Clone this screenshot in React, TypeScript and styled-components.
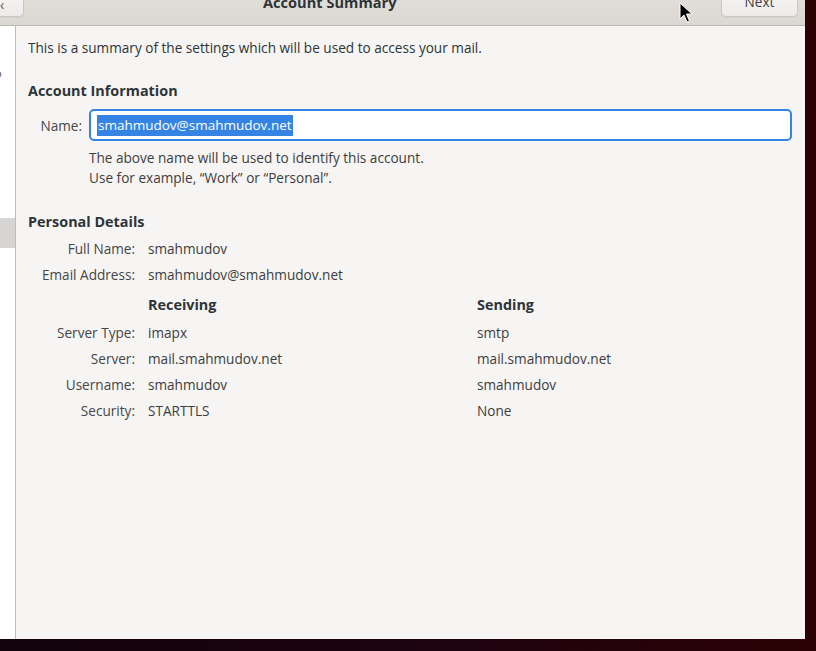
import React from "react";
import styled, { createGlobalStyle } from "styled-components";

const Global = createGlobalStyle`
  html, body { margin: 0; padding: 0; }
  body {
    width: 816px;
    height: 651px;
    overflow: hidden;
    background: linear-gradient(90deg, #12030d 0%, #1c0310 50%, #2c0205 100%);
    font-family: "Open Sans", "Noto Sans", sans-serif;
    font-size: 13.6px;
    color: #2e3436;
  }
`;

const Screen = styled.div`
  position: relative;
  width: 816px;
  height: 651px;
  overflow: hidden;
`;

const Window = styled.div`
  width: 805px;
  height: 639px;
  background: #f6f5f4;
  display: flex;
  flex-direction: column;
  overflow: hidden;
`;

const HeaderBar = styled.div`
  height: 25px;
  flex: none;
  display: flex;
  align-items: flex-start;
  background: linear-gradient(#e1deda, #dbd8d4);
  border-bottom: 1px solid #bdb8b2;
`;

const HeaderButton = styled.div<{ $width: number }>`
  width: ${(p) => p.$width}px;
  height: 27px;
  margin-top: -10px;
  box-sizing: border-box;
  background: linear-gradient(#f6f5f4, #edebe9);
  border: 1px solid #cdc7c2;
  border-radius: 5px;
  box-shadow: 0 1px 0 rgba(0, 0, 0, 0.05);
  display: flex;
  align-items: center;
  justify-content: center;
  font-size: 13.6px;
  color: #2e3436;
  padding-top: 2px;
`;

const BackButton = styled(HeaderButton)`
  border-top-left-radius: 0;
  border-bottom-left-radius: 0;
  border-left: none;
  justify-content: flex-start;
  font-size: 14px;
  color: #555;
`;

const Title = styled.div`
  margin-left: 239px;
  margin-top: -6px;
  font-weight: 700;
  font-size: 14.6px;
  line-height: 17px;
  color: #2e3436;
`;

const Spacer = styled.div`
  flex: 1;
`;

const NextButton = styled(HeaderButton)`
  margin-right: 7px;
  align-items: flex-start;
  padding-top: 3px;
  line-height: 16px;
  color: #3d3d3d;
`;

const Body = styled.div`
  flex: 1;
  display: flex;
  min-height: 0;
`;

const Sidebar = styled.div`
  width: 15px;
  flex: none;
  background: #ffffff;
  border-right: 1px solid #c0bdb9;
  display: flex;
  flex-direction: column;
  overflow: hidden;
`;

const SideItem = styled.div<{ $selected?: boolean; $height: number }>`
  height: ${(p) => p.$height}px;
  background: ${(p) => (p.$selected ? "#d6d5d3" : "transparent")};
  font-size: 13px;
  line-height: ${(p) => p.$height}px;
  color: #666;
  white-space: nowrap;
  text-indent: -6px;
`;

const Content = styled.div`
  flex: 1;
  padding: 13px 13px 0 12px;
  display: flex;
  flex-direction: column;
`;

const Intro = styled.div`
  line-height: 18px;
  color: #2e3436;
`;

const SectionTitle = styled.div<{ $top: number }>`
  margin-top: ${(p) => p.$top}px;
  font-weight: 700;
  font-size: 14.4px;
  line-height: 18px;
  color: #2e3436;
`;

const NameGrid = styled.div`
  margin-top: 9px;
  display: grid;
  grid-template-columns: 54px 1fr;
  column-gap: 7px;
  align-items: center;
`;

const Label = styled.div`
  text-align: right;
  color: #464646;
  white-space: nowrap;
`;

const NameInput = styled.div`
  height: 32px;
  box-sizing: border-box;
  border: 2px solid #3584e4;
  border-radius: 5px;
  background: #ffffff;
  display: flex;
  align-items: center;
  padding-left: 6px;
`;

const Selected = styled.span`
  background: #3584e4;
  color: #ffffff;
  font-size: 13.5px;
  line-height: 21px;
  padding: 0 1px;
`;

const Help = styled.div`
  margin-top: 7px;
  margin-left: 61px;
  line-height: 20px;
  color: #3d3d3d;
`;

const DetailGrid = styled.div`
  margin-top: 4px;
  display: grid;
  grid-template-columns: 107px 316px 1fr;
  grid-template-rows: 26px 26px 32px repeat(4, 26px);
  column-gap: 13px;
  align-items: center;
`;

const Value = styled.div`
  color: #3d3d3d;
  white-space: nowrap;
`;

const ColumnHead = styled.div`
  font-weight: 700;
  font-size: 14.4px;
  color: #2e3436;
  padding-top: 3px;
`;

const Cursor = styled.svg`
  position: absolute;
  left: 679px;
  top: 2px;
`;

const personal: [string, string][] = [
  ["Full Name:", "smahmudov"],
  ["Email Address:", "smahmudov@smahmudov.net"],
];

const servers: [string, string, string][] = [
  ["Server Type:", "imapx", "smtp"],
  ["Server:", "mail.smahmudov.net", "mail.smahmudov.net"],
  ["Username:", "smahmudov", "smahmudov"],
  ["Security:", "STARTTLS", "None"],
];

export default function App() {
  return (
    <Screen>
      <Global />
      <Window>
        <HeaderBar>
          <BackButton $width={24}>‹</BackButton>
          <Title>Account Summary</Title>
          <Spacer />
          <NextButton $width={77}>Next</NextButton>
        </HeaderBar>
        <Body>
          <Sidebar>
            <SideItem $height={36} />
            <SideItem $height={22}>o</SideItem>
            <SideItem $height={134} />
            <SideItem $height={30} $selected />
          </Sidebar>
          <Content>
            <Intro>
              This is a summary of the settings which will be used to access
              your mail.
            </Intro>
            <SectionTitle $top={25}>Account Information</SectionTitle>
            <NameGrid>
              <Label>Name:</Label>
              <NameInput>
                <Selected>smahmudov@smahmudov.net</Selected>
              </NameInput>
            </NameGrid>
            <Help>
              The above name will be used to identify this account.
              <br />
              Use for example, “Work” or “Personal”.
            </Help>
            <SectionTitle $top={25}>Personal Details</SectionTitle>
            <DetailGrid>
              {personal.map(([l, v]) => (
                <React.Fragment key={l}>
                  <Label>{l}</Label>
                  <Value>{v}</Value>
                  <div />
                </React.Fragment>
              ))}
              <div />
              <ColumnHead>Receiving</ColumnHead>
              <ColumnHead>Sending</ColumnHead>
              {servers.map(([l, r, s]) => (
                <React.Fragment key={l}>
                  <Label>{l}</Label>
                  <Value>{r}</Value>
                  <Value>{s}</Value>
                </React.Fragment>
              ))}
            </DetailGrid>
          </Content>
        </Body>
      </Window>
      <Cursor width="14" height="22" viewBox="0 0 14 22">
        <path
          d="M1 1 L1 17 L5 13 L8 20 L10.5 19 L7.5 12 L13 12 Z"
          fill="#000"
          stroke="#fff"
          strokeWidth="1"
          strokeLinejoin="round"
        />
      </Cursor>
    </Screen>
  );
}
